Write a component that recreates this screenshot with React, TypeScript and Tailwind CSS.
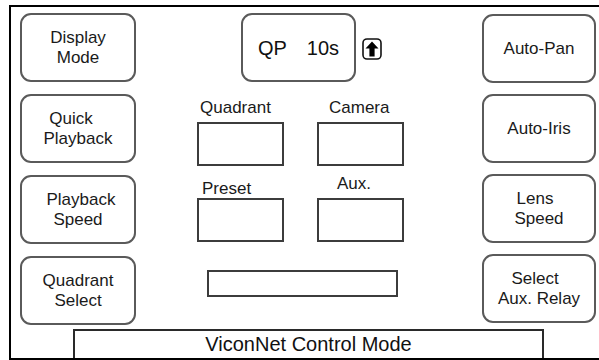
const font = { fontFamily: '"Liberation Sans", Arial, sans-serif' };

type Line = { text: string; cls?: string };

function SoftKey({ lines }: { lines: Line[] }) {
  return (
    <div className="flex h-[69px] flex-col items-center justify-center rounded-[11px] border-2 border-[#5a5a5a] text-[17px] leading-[20px] text-[#1a1a1a]">
      {lines.map((l) => (
        <span key={l.text} className={l.cls}>
          {l.text}
        </span>
      ))}
    </div>
  );
}

function Field({ label, labelClass }: { label: string; labelClass: string }) {
  return (
    <div className="flex flex-col">
      <span className={`text-[17px] leading-[20px] text-[#1a1a1a] ${labelClass}`}>{label}</span>
      <div className="h-[44px] w-[87px] border-2 border-[#3c3c3c]" />
    </div>
  );
}

function UpArrow() {
  return (
    <svg width="20" height="22" viewBox="0 0 20 22" className="mt-[25px] ml-[6px] shrink-0">
      <rect x="1" y="1" width="18" height="20" rx="4" fill="white" stroke="#111" strokeWidth="1.6" />
      <path d="M10 3.5 L16.5 10.5 L12.6 10.5 L12.6 18.5 L7.4 18.5 L7.4 10.5 L3.5 10.5 Z" fill="#000" />
    </svg>
  );
}

export default function App() {
  return (
    <div className="h-[360px] w-[599px] overflow-hidden bg-white" style={font}>
      <div className="ml-[9px] mt-[5px] flex h-[355px] w-[592px] flex-col border-2 border-black">
        <div className="flex items-start pt-[6px]">
          {/* left keys */}
          <div className="ml-[9px] flex w-[116px] flex-col gap-[12px]">
            <SoftKey lines={[{ text: 'Display' }, { text: 'Mode' }]} />
            <SoftKey lines={[{ text: 'Quick', cls: 'mr-[14px]' }, { text: 'Playback' }]} />
            <SoftKey lines={[{ text: 'Playback', cls: 'ml-[6px]' }, { text: 'Speed' }]} />
            <SoftKey lines={[{ text: 'Quadrant' }, { text: 'Select' }]} />
          </div>

          {/* center area */}
          <div className="flex w-[346px] flex-col">
            <div className="ml-[105px] flex">
              <div className="flex h-[69px] w-[115px] items-center justify-center gap-[20px] rounded-[11px] border-2 border-[#5a5a5a] text-[20px] text-[#111]">
                <span>QP</span>
                <span>10s</span>
              </div>
              <UpArrow />
            </div>

            <div className="ml-[61px] mt-[16px] flex gap-[33px]">
              <Field label="Quadrant" labelClass="ml-[3px] mb-[4px]" />
              <Field label="Camera" labelClass="ml-[12px] mb-[4px]" />
            </div>

            <div className="ml-[61px] mt-[8px] flex items-end gap-[33px]">
              <Field label="Preset" labelClass="ml-[5px] mb-[-1px]" />
              <Field label="Aux." labelClass="ml-[20px] mb-[4px]" />
            </div>

            <div className="ml-[71px] mt-[28px] h-[27px] w-[191px] border-2 border-[#3c3c3c]" />
          </div>

          {/* right keys */}
          <div className="mt-[1px] flex w-[114px] flex-col gap-[11px]">
            <SoftKey lines={[{ text: 'Auto-Pan' }]} />
            <SoftKey lines={[{ text: 'Auto-Iris' }]} />
            <SoftKey lines={[{ text: 'Lens', cls: 'mr-[8px]' }, { text: 'Speed' }]} />
            <SoftKey lines={[{ text: 'Select', cls: 'mr-[8px]' }, { text: 'Aux. Relay' }]} />
          </div>
        </div>

        <div className="ml-[62px] mt-auto flex h-[29px] w-[471px] items-center justify-center border-x-2 border-t-2 border-[#2a2a2a] pb-[2px] text-[20px] text-[#111]">
          ViconNet Control Mode
        </div>
      </div>
    </div>
  );
}
